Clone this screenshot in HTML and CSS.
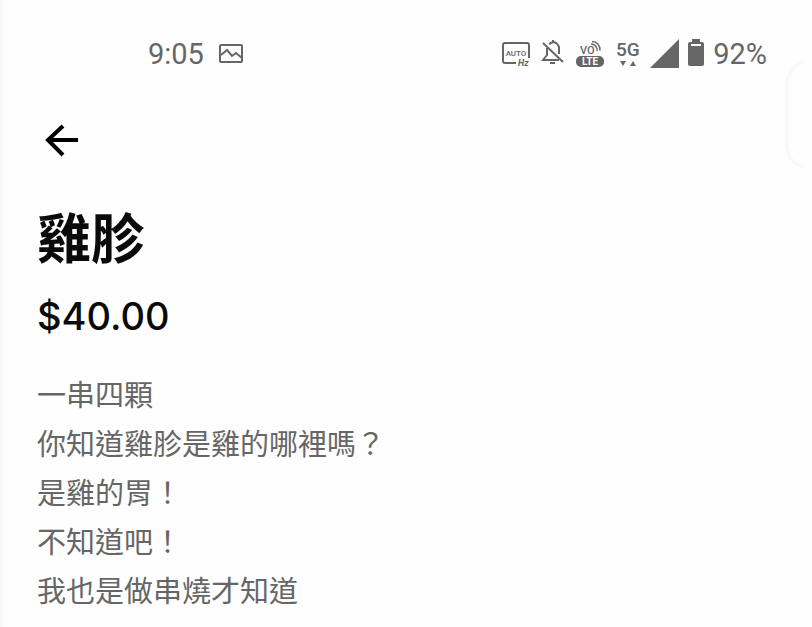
FILE: index.html
```
<!DOCTYPE html>
<html lang="zh-Hant">
<head>
<meta charset="UTF-8" />
<meta name="viewport" content="width=device-width, initial-scale=1" />
<title>雞胗</title>
<link rel="stylesheet" href="styles.css">
</head>
<body>
  <div class="status-bar">
    <div class="status-left">
      <span>9:05</span>
      <svg width="26" height="20" viewBox="0 0 26 20" fill="none" stroke="#666" stroke-width="2" aria-hidden="true">
        <rect x="2" y="1" width="22" height="17" rx="1" />
        <path d="M3 11l6-5 5 6 4-3 6 5" />
      </svg>
    </div>
    <div class="status-right">
      <svg width="30" height="30" viewBox="0 0 30 30" aria-hidden="true">
        <path d="M15 24H4a2 2 0 0 1-2-2V6a2 2 0 0 1 2-2h22a2 2 0 0 1 2 2v13" fill="none" stroke="#666" stroke-width="2" />
        <text x="15" y="17" class="icon-text" font-size="8" text-anchor="middle">AUTO</text>
        <text x="17" y="27" class="icon-text italic" font-size="9">Hz</text>
      </svg>
      <svg width="24" height="30" viewBox="0 0 24 30" fill="none" stroke="#666" stroke-width="2" aria-hidden="true">
        <path d="M2 4l20 19" />
        <path d="M6 9v7l-4 5h16M8 5l4-2c3 0 6 3 6 6v6" />
        <path d="M12 1v3M9 24h5" />
      </svg>
      <svg width="30" height="30" viewBox="0 0 30 30" aria-hidden="true">
        <text x="5" y="15" class="icon-text" font-size="11">VO</text>
        <path d="M16 5a6 6 0 0 1 6 7M17 2.500a8 8 0 0 1 8 9" fill="none" stroke="#666" stroke-width="1.500" />
        <rect x="1" y="17" width="28" height="11" rx="5" fill="#666" />
        <text x="15" y="26" class="icon-text light" font-size="10" text-anchor="middle">LTE</text>
      </svg>
      <svg class="tight" width="26" height="30" viewBox="0 0 26 30" aria-hidden="true">
        <text x="1" y="17" class="icon-text" font-size="19">5G</text>
        <path d="M5 22h6l-3 5zM15 27h6l-3-5z" fill="#666" />
      </svg>
      <svg class="tight" width="30" height="30" viewBox="0 0 30 30" aria-hidden="true">
        <path d="M1 29L30 0v29z" fill="#666" />
      </svg>
      <svg class="tight" width="18" height="30" viewBox="0 0 18 30" aria-hidden="true">
        <path d="M5 0h8v3h2a2 2 0 0 1 2 2v20a2 2 0 0 1-2 2H3a2 2 0 0 1-2-2V5a2 2 0 0 1 2-2h2z" fill="#666" />
        <path d="M4 6h10" stroke="#fefefe" stroke-width="2" />
      </svg>
      <span>92%</span>
    </div>
  </div>

  <main class="item">
    <button type="button" class="back" aria-label="返回">
      <svg width="36" height="36" viewBox="0 0 36 36" fill="none" stroke="#000" stroke-width="4" aria-hidden="true">
        <path d="M35 18H5M20 4L5 18l15 15" />
      </svg>
    </button>
    <h1>雞胗</h1>
    <p class="price">$40.00</p>
    <p class="description">
      一串四顆<br>
      你知道雞胗是雞的哪裡嗎？<br>
      是雞的胃！<br>
      不知道吧！<br>
      我也是做串燒才知道
    </p>
  </main>

  <!-- edge panel handle, floats over the page -->
  <div class="edge-handle"></div>
</body>
</html>
```
FILE: styles.css
```
* {
  box-sizing: border-box;
}
body {
  margin: 0;
  min-height: 100vh;
  position: relative;
  overflow-x: hidden;
  border-left: 3px solid #f9f9f9;
  background: #fefefe;
  color: #0a0a0a;
  font-family: Roboto, "Noto Sans CJK TC", sans-serif;
}
.status-bar {
  display: flex;
  justify-content: space-between;
  align-items: center;
  padding: 36px 45px 0 145px;
  color: #666;
  font-size: 29px;
  line-height: 36px;
}
.status-left, .status-right {
  display: flex;
  align-items: center;
}
.status-left {
  gap: 14px;
}
.status-right svg {
  margin-right: 10px;
}
.status-right .tight {
  margin-right: 8px;
}
.icon-text {
  font-family: Roboto, sans-serif;
  font-weight: 500;
  fill: #666;
}
.icon-text.italic {
  font-style: italic;
  font-weight: 700;
}
.icon-text.light {
  fill: #fefefe;
  font-weight: 700;
}
.item {
  padding: 50px 34px 0;
}
.back {
  display: block;
  margin-left: 6px;
  padding: 0;
  border: none;
  background: none;
  cursor: pointer;
}
.back svg {
  display: block;
}
h1 {
  margin: 51px 0 0;
  font-size: 54px;
  line-height: 64px;
  font-weight: 700;
}
.price {
  margin: 19px 0 0;
  font-family: Inter, sans-serif;
  font-size: 38px;
  line-height: 48px;
  font-weight: 500;
}
.description {
  margin: 29px 0 0;
  color: #666;
  font-family: "Noto Sans CJK TC", sans-serif;
  font-size: 29px;
  line-height: 49px;
}
.edge-handle {
  position: absolute;
  top: 61px;
  right: 8px;
  width: 19px;
  height: 107px;
  border: 3px solid #f9f9f9;
  border-width: 3px 0 3px 3px;
  border-radius: 19px 0 0 19px / 26px 0 0 26px;
}
```
